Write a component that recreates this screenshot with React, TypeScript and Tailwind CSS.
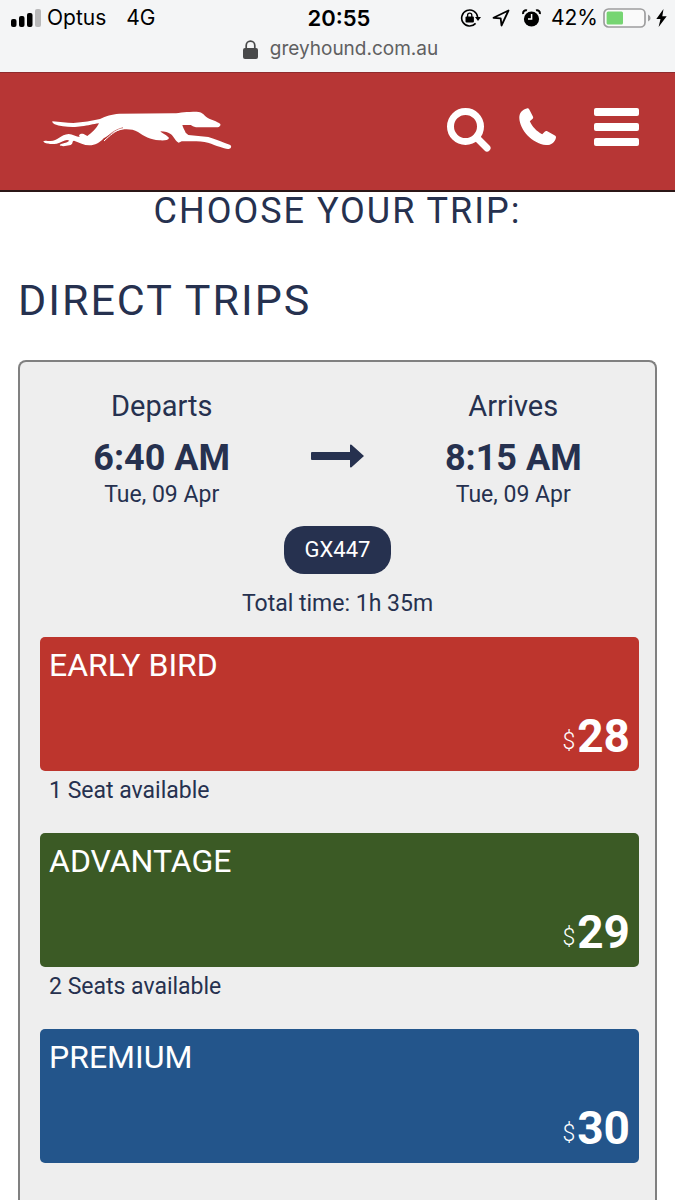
const fares = [
  { name: "Early Bird", price: 28, seats: "1 Seat available", color: "bg-[#bd352d]" },
  { name: "Advantage", price: 29, seats: "2 Seats available", color: "bg-[#3b5a25]" },
  { name: "Premium", price: 30, seats: "", color: "bg-[#23558b]" },
];

function StatusBar() {
  return (
    <div className="h-[72px] bg-[#f4f5f6] font-['Inter',sans-serif] text-black">
      <div className="grid h-9 grid-cols-[1fr_auto_1fr] items-center pl-[11px] pr-2 text-[21px] leading-6">
        <div className="flex items-center">
          <svg width="30" height="18" viewBox="0 0 30 18" aria-hidden="true">
            <rect x="0" y="10" width="5.5" height="8" rx="2" />
            <rect x="8" y="7" width="5.5" height="11" rx="2" />
            <rect x="16" y="4" width="5.5" height="14" rx="2" />
            <rect x="24" y="0" width="6" height="18" rx="2" fill="#b9b9ba" />
          </svg>
          <span className="ml-[6px]">Optus</span>
          <span className="ml-5">4G</span>
        </div>
        <span className="text-[22px] font-semibold">20:55</span>
        <div className="flex items-center justify-end">
          {/* rotation lock */}
          <svg width="22" height="20" viewBox="0 0 22 20" fill="none" stroke="black" strokeWidth="1.6" aria-hidden="true">
            <path d="M15.6 15.4A8 8 0 1 1 17.6 9" />
            <path d="M15 9h6l-3 4z" fill="black" stroke="none" />
            <rect x="5.5" y="8.5" width="8.4" height="6" rx="1" fill="black" stroke="none" />
            <path d="M7.6 9V7.2a2.1 2.1 0 0 1 4.2 0V9" strokeWidth="1.3" />
          </svg>
          <svg className="ml-[10px]" width="18" height="18" viewBox="0 0 18 18" fill="none" stroke="black" strokeWidth="1.8" strokeLinejoin="round" aria-hidden="true">
            <path d="M16.5 1.5 1.5 8.8l7.2.6.8 7.1z" />
          </svg>
          {/* alarm */}
          <svg className="ml-3" width="19" height="18" viewBox="0 0 19 18" aria-hidden="true">
            <circle cx="9.5" cy="10" r="7.6" />
            <path d="M1.2 5A3 3 0 0 1 5 1.4M17.8 5a3 3 0 0 0-3.8-3.6" fill="none" stroke="black" strokeWidth="2" />
            <path d="M9.6 5v5H6" fill="none" stroke="white" strokeWidth="1.5" />
          </svg>
          <span className="ml-[10px]">42%</span>
          <svg className="ml-[5px]" width="48" height="20" viewBox="0 0 48 20" aria-hidden="true">
            <rect x="1" y="1" width="41" height="18" rx="4.5" fill="#fafafa" stroke="#9d9d9e" strokeWidth="1.7" />
            <rect x="3.6" y="3.6" width="16.4" height="12.8" rx="1.5" fill="#76d572" />
            <path d="M45 6.5q2.6 1 2.6 3.5T45 13.5z" fill="#9d9d9e" />
          </svg>
          <svg className="ml-[5px]" width="11" height="18" viewBox="0 0 11 18" aria-hidden="true">
            <path d="M7.5 0 .3 10h4.2L2.6 18 10.7 7.3H6.3z" />
          </svg>
        </div>
      </div>
      <div className="flex h-[26px] items-center justify-center pl-[6px] text-[19px] leading-6 text-[#5f6061]">
        <svg className="mr-3" width="15" height="19" viewBox="0 0 15 19" aria-hidden="true">
          <rect x="0" y="8" width="15" height="11" rx="2" fill="#48494a" />
          <path d="M3.2 9V5.4a4.3 4.3 0 0 1 8.6 0V9" fill="none" stroke="#48494a" strokeWidth="1.7" />
        </svg>
        <span>greyhound.com.au</span>
      </div>
    </div>
  );
}

function GreyhoundLogo() {
  return (
    <svg width="192" height="40" viewBox="36 45 576 120" fill="white" aria-hidden="true">
      <path d="M67 79C90 81 108 84 130 84C160 82 185 78 210 72C228 63 244 58 268 56L430 55C452 53 470 50 500 50C516 51 520 57 528 65C542 75 562 78 571 87C573 94 566 97 558 97L498 97C490 95 486 92 482 90L457 90C459 98 464 106 467 113L475 120L535 126C555 132 580 142 601 150C606 155 603 162 594 162C580 160 560 152 534 143C515 138 490 138 455 139L446 143C437 140 432 126 423 118C415 112 405 110 391 109C398 117 412 121 417 129C415 136 402 137 388 136C360 134 342 124 324 111C310 103 292 102 276 104C254 107 240 118 221 130C208 144 196 151 178 151C162 151 148 143 132 137C124 139 132 148 118 151C107 154 92 155 89 150C96 143 110 145 118 137C108 130 96 142 80 146C64 149 43 147 40 139C43 135 51 138 62 138C82 138 92 119 116 117C128 117 138 126 150 126C143 121 151 114 161 117L172 123C184 115 200 100 207 85C188 87 176 92 154 94C132 98 94 96 74 88C69 85 66 82 67 79Z" />
      <path d="M220 138C238 117 253 105 279 98" fill="none" stroke="#b73635" strokeWidth="2" />
      <path d="M222 138C240 121 256 107 274 102" fill="none" stroke="white" strokeWidth="3" />
    </svg>
  );
}

function Header() {
  return (
    <header className="flex h-[120px] items-center justify-between border-b-2 border-t border-b-[#2b1616] border-t-[#8f2b2d] bg-[#b73635] pb-[3px] pl-[42px] pr-9">
      <a href="#home" aria-label="Greyhound home">
        <GreyhoundLogo />
      </a>
      <nav className="flex items-start">
        <button type="button" aria-label="Search">
          <svg className="block" width="44" height="44" viewBox="0 0 44 44" fill="none" stroke="white" strokeWidth="7">
            <circle cx="18.5" cy="18.5" r="15" />
            <path d="m29.5 29.5 10.5 10.5" strokeLinecap="round" />
          </svg>
        </button>
        <button type="button" aria-label="Call us" className="ml-7">
          <svg className="block" width="38" height="38" viewBox="0 0 38 38" fill="white">
            <path d="M7.8.4C9 .1 9.8.5 10.3 1.5l3.6 7c.5 1 .3 1.9-.5 2.6l-2.6 2.2c2.7 5.6 6.3 9.7 12.4 13l2.5-2.6c.8-.8 1.7-.9 2.6-.4l7.6 4.2c1 .6 1.3 1.4 1 2.5-1.3 4.8-4.9 7.3-9.9 7.1C12.9 35.2.8 22 .3 9.9.2 4.9 3.2 1.6 7.8.4z" />
          </svg>
        </button>
        <button type="button" aria-label="Menu" className="ml-[37px]">
          <svg className="block" width="45" height="38" viewBox="0 0 45 38" fill="white">
            <rect width="45" height="8" rx="2" />
            <rect y="15" width="45" height="8" rx="2" />
            <rect y="30" width="45" height="8" rx="2" />
          </svg>
        </button>
      </nav>
    </header>
  );
}

function Stop({ label, time, date }: { label: string; time: string; date: string }) {
  return (
    <div className="text-center">
      <p className="text-[29px] leading-9">{label}</p>
      <p className="mt-[14px] text-[36px] font-bold leading-10">{time}</p>
      <p className="text-[23px] leading-[34px]">{date}</p>
    </div>
  );
}

export default function App() {
  return (
    <div className="flex min-h-screen flex-col bg-white font-['Roboto',sans-serif] text-[#26314f]">
      <StatusBar />
      <Header />
      <main className="flex flex-1 flex-col px-[18px]">
        <h1 className="text-center text-[36px] uppercase leading-[38px] tracking-[2px]">Choose your trip:</h1>
        <h2 className="mb-[34px] mt-11 text-[43px] uppercase leading-[52px] tracking-[2px]">Direct trips</h2>

        <section className="flex-1 rounded-t-lg border-2 border-b-0 border-[#808080] bg-[#eeeeee] pt-[26px]">
          <div className="grid grid-cols-[9fr_4fr_9fr] px-5">
            <Stop label="Departs" time="6:40 AM" date="Tue, 09 Apr" />
            <div className="flex items-center justify-center pt-3">
              <svg width="53" height="24" viewBox="0 0 53 24" fill="currentColor" aria-hidden="true">
                <path d="M1 8h38V1.5q0-1.5 1.5-.8L53 12 40.5 23.3q-1.5.7-1.5-.8V16H1q-1 0-1-1V9q0-1 1-1z" />
              </svg>
            </div>
            <Stop label="Arrives" time="8:15 AM" date="Tue, 09 Apr" />
          </div>

          <div className="mt-[14px] flex flex-col items-center">
            <span className="rounded-[20px] bg-[#26314f] px-[21px] py-2 text-[22px] leading-8 text-white">GX447</span>
            <p className="mt-[14px] text-[23px] leading-8">Total time: 1h 35m</p>
          </div>

          <ul className="mt-[17px] pl-5 pr-4">
            {fares.map((fare) => (
              <li key={fare.name} className="mb-[26px]">
                <button
                  type="button"
                  className={`flex h-[134px] w-full flex-col justify-between rounded-[5px] px-[9px] pb-[10px] pt-2 text-left text-white ${fare.color}`}
                >
                  <span className="text-[32px] uppercase leading-10">{fare.name}</span>
                  <span className="flex items-center self-end">
                    <span className="mr-[2px] pt-3 text-[23px] font-light leading-8">$</span>
                    <span className="text-[46px] font-bold leading-[50px]">{fare.price}</span>
                  </span>
                </button>
                {fare.seats && <p className="px-[9px] pt-1 text-[23px] leading-8">{fare.seats}</p>}
              </li>
            ))}
          </ul>
        </section>
      </main>
    </div>
  );
}
